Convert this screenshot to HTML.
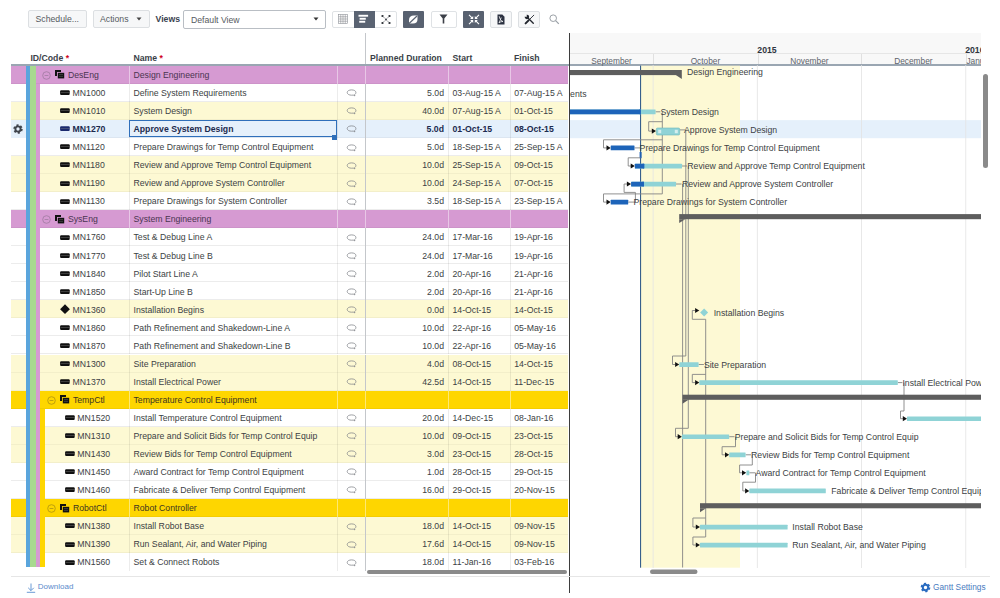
<!DOCTYPE html><html><head><meta charset="utf-8"><style>
*{box-sizing:border-box}
html,body{margin:0;padding:0;width:1000px;height:598px;overflow:hidden;background:#fff;font-family:"Liberation Sans",sans-serif;}
.a{position:absolute}
.t{position:absolute;white-space:nowrap;font-size:8.7px;line-height:12px;color:#3c3f44}
.btn{position:absolute;border:1px solid #dcdfe2;border-radius:2px;background:#f6f7f8}
</style></head><body>

<div class="btn" style="left:28px;top:10px;width:59px;height:18px"></div>
<div class="t" style="left:35.5px;top:13px;color:#555a60">Schedule...</div>
<div class="btn" style="left:93px;top:10px;width:57px;height:18px"></div>
<div class="t" style="left:100px;top:13px;color:#555a60">Actions</div>
<svg class="a" style="left:135.5px;top:17px" width="6" height="4"><path d="M0.5 0.5 L5.5 0.5 L3 3.5Z" fill="#444"/></svg>
<div class="t" style="left:155.5px;top:13px;font-weight:bold;color:#3a4250">Views</div>
<div class="a" style="left:183px;top:10px;width:143px;height:19px;border:1px solid #b9bec4;border-radius:2px;background:#fff"></div>
<div class="t" style="left:191px;top:13.5px;color:#555a60">Default View</div>
<svg class="a" style="left:313px;top:17px" width="6" height="4"><path d="M0.5 0.5 L5.5 0.5 L3 3.5Z" fill="#333"/></svg>
<div class="a" style="left:331.5px;top:10.5px;width:65px;height:17.5px;border:1px solid #dfe2e5;border-radius:2px;background:#fff"></div>
<div class="a" style="left:353.5px;top:10.5px;width:21.5px;height:17.5px;background:#5a6372"></div>
<svg class="a" style="left:338px;top:14px" width="10" height="10"><g stroke="#8d9096" stroke-width="0.6" fill="none"><rect x="0.5" y="0.5" width="9" height="9"/><path d="M2.75 0.5V9.5M5 0.5V9.5M7.25 0.5V9.5M0.5 2.75H9.5M0.5 5H9.5M0.5 7.25H9.5"/></g></svg>
<svg class="a" style="left:358px;top:14px" width="12" height="10"><g fill="#fff"><rect x="0.5" y="0.8" width="9.6" height="1.9"/><rect x="1.6" y="3.8" width="6.2" height="1.9"/><rect x="1.2" y="6.8" width="6" height="1.9"/></g></svg>
<svg class="a" style="left:380px;top:13.5px" width="12" height="11"><g fill="#2a2e35"><ellipse cx="2.5" cy="2" rx="1.2" ry="0.9"/><ellipse cx="9.5" cy="2" rx="1.2" ry="0.9"/><circle cx="6" cy="5.5" r="0.9"/><ellipse cx="2.5" cy="9" rx="1.2" ry="0.9"/><ellipse cx="9.5" cy="9" rx="1.2" ry="0.9"/></g><path d="M3.5 3L5 4.5M8.5 3L7 4.5M3.5 8L5 6.5M8.5 8L7 6.5" stroke="#2a2e35" stroke-width="0.5"/></svg>
<div class="a" style="left:402.5px;top:10.5px;width:21.5px;height:17.5px;background:#586170;border-radius:1px"></div>
<svg class="a" style="left:407px;top:13.5px" width="12" height="11"><path d="M2 6 Q2 1.5 7 1.5 L10.5 1.5 L10.5 5 Q10.5 9.5 6 9.5 L2 9.5Z" fill="#fff"/><path d="M1.5 10 L10 2" stroke="#5a6372" stroke-width="1.2"/></svg>
<div class="a" style="left:430.5px;top:10.5px;width:26px;height:17.5px;border:1px solid #dfe2e5;border-radius:2px;background:#fff"></div>
<svg class="a" style="left:439px;top:14px" width="9" height="10"><path d="M0.5 0.5H8.5L5.3 4.5V9.5H3.7V4.5Z" fill="#3c4048"/></svg>
<div class="a" style="left:462.5px;top:10.5px;width:21.5px;height:17.5px;background:#586170;border-radius:1px"></div>
<svg class="a" style="left:467.5px;top:13.5px" width="12" height="11"><g fill="#fff"><path d="M5.2 5L5.2 1.9L2.1 5Z"/><path d="M6.8 5L6.8 1.9L9.9 5Z"/><path d="M5.2 6L5.2 9.1L2.1 6Z"/><path d="M6.8 6L6.8 9.1L9.9 6Z"/></g><g stroke="#fff" stroke-width="1.1"><path d="M1 0.8L4 3.8M11 0.8L8 3.8M1 10.2L4 7.2M11 10.2L8 7.2"/></g></svg>
<div class="btn" style="left:490px;top:10.5px;width:22px;height:17.5px"></div>
<svg class="a" style="left:497px;top:13.5px" width="8" height="11"><path d="M0.5 0.5H5.3L7.5 2.7V10.5H0.5Z" fill="#2b3140"/><path d="M2.2 2.2C2.6 4.5 3.6 6.5 6 7.6C4.4 7.4 3 7.9 2 9C2.8 7 3.6 5.5 4.2 3.5" stroke="#fff" stroke-width="0.8" fill="none"/></svg>
<div class="btn" style="left:518px;top:10.5px;width:22px;height:17.5px"></div>
<svg class="a" style="left:523.5px;top:13.5px" width="11" height="11"><g stroke="#22262e" stroke-linecap="round" fill="none"><path d="M3.5 3.5L9.3 9.3" stroke-width="1.3"/><path d="M9.8 1.2L5.5 5.5" stroke-width="0.9"/><path d="M4.6 6.4L1.6 9.4" stroke-width="2"/></g><path d="M0.8 2.6A2.2 2.2 0 1 0 2.6 0.8L2.9 2.2L2.2 2.9Z" fill="#22262e"/></svg>
<svg class="a" style="left:549px;top:14px" width="11" height="11"><circle cx="4.2" cy="4.2" r="3.3" stroke="#9aa0a6" stroke-width="1" fill="none"/><path d="M6.6 6.6L9.8 9.8" stroke="#9aa0a6" stroke-width="1.2"/></svg>
<div class="t" style="left:30.4px;top:51.6px;font-weight:bold;color:#3a3f48">ID/Code <span style="color:#d0021b">*</span></div>
<div class="t" style="left:133.5px;top:51.6px;font-weight:bold;color:#3a3f48">Name <span style="color:#d0021b">*</span></div>
<div class="t" style="left:370px;top:51.6px;font-weight:bold;color:#3a3f48">Planned Duration</div>
<div class="t" style="left:452.5px;top:51.6px;font-weight:bold;color:#3a3f48">Start</div>
<div class="t" style="left:514px;top:51.6px;font-weight:bold;color:#3a3f48">Finish</div>
<div class="a" style="left:365px;top:33px;width:1px;height:31px;background:#c4c7cb"></div>
<div class="a" style="left:11px;top:64.1px;width:558px;height:1.6px;background:#9aa6b2"></div>
<div class="a" style="left:11px;top:65.70px;width:557px;height:18.05px;background:#d69ad2;border-bottom:1px solid rgba(0,0,0,0.04)"></div>
<svg class="a" style="left:42.3px;top:70.80px" width="9" height="9"><circle cx="4.5" cy="4.5" r="3.8" stroke="#a67ea6" stroke-width="0.9" fill="none"/><path d="M2.6 4.5H6.4" stroke="#a67ea6" stroke-width="0.9"/></svg>
<svg class="a" style="left:55.2px;top:70.40px" width="10" height="9"><path d="M0 0H6V2H2V6H0Z" fill="#111"/><rect x="2.8" y="2.8" width="6.4" height="5.6" fill="#111"/><path d="M4 4.6H8M4 6.4H8" stroke="#666" stroke-width="0.5"/></svg>
<div class="t" style="left:67.9px;top:69.00px;color:#4a3550">DesEng</div>
<div class="t" style="left:133.5px;top:69.00px;color:#4a3550">Design Engineering</div>
<div class="a" style="left:11px;top:83.75px;width:557px;height:18.05px;background:#ffffff;border-bottom:1px solid #ececec"></div>
<svg class="a" style="left:60px;top:90.25px" width="10" height="6"><rect x="0.1" y="0.3" width="9.6" height="4.6" rx="1" fill="#111"/><rect x="0.8" y="2.25" width="8.2" height="0.7" fill="#888" opacity="0.55"/></svg>
<div class="t" style="left:72.6px;top:87.05px;color:#3c3f44;">MN1000</div>
<div class="t" style="left:133.5px;top:87.05px;color:#3c3f44;">Define System Requirements</div>
<svg class="a" style="left:346px;top:89.35px" width="11" height="8"><path d="M5.6 0.9C8.2 0.9 9.9 2 9.9 3.5C9.9 4.6 9.2 5.4 8.4 5.8L9 6.9L7.2 6.1C6.7 6.2 6.2 6.2 5.6 6.2C3 6.2 1.2 5 1.2 3.5C1.2 2 3 0.9 5.6 0.9Z" stroke="#7d8085" stroke-width="0.75" fill="none"/></svg>
<div class="t" style="left:368px;width:76px;text-align:right;top:87.05px;color:#3c3f44;">5.0d</div>
<div class="t" style="left:452.5px;top:87.05px;color:#3c3f44;">03-Aug-15 A</div>
<div class="t" style="left:514.2px;top:87.05px;color:#3c3f44;">07-Aug-15 A</div>
<div class="a" style="left:11px;top:101.80px;width:557px;height:18.05px;background:#fdf9d3;border-bottom:1px solid rgba(0,0,0,0.04)"></div>
<svg class="a" style="left:60px;top:108.30px" width="10" height="6"><rect x="0.1" y="0.3" width="9.6" height="4.6" rx="1" fill="#111"/><rect x="0.8" y="2.25" width="8.2" height="0.7" fill="#888" opacity="0.55"/></svg>
<div class="t" style="left:72.6px;top:105.10px;color:#3c3f44;">MN1010</div>
<div class="t" style="left:133.5px;top:105.10px;color:#3c3f44;">System Design</div>
<svg class="a" style="left:346px;top:107.40px" width="11" height="8"><path d="M5.6 0.9C8.2 0.9 9.9 2 9.9 3.5C9.9 4.6 9.2 5.4 8.4 5.8L9 6.9L7.2 6.1C6.7 6.2 6.2 6.2 5.6 6.2C3 6.2 1.2 5 1.2 3.5C1.2 2 3 0.9 5.6 0.9Z" stroke="#7d8085" stroke-width="0.75" fill="none"/></svg>
<div class="t" style="left:368px;width:76px;text-align:right;top:105.10px;color:#3c3f44;">40.0d</div>
<div class="t" style="left:452.5px;top:105.10px;color:#3c3f44;">07-Aug-15 A</div>
<div class="t" style="left:514.2px;top:105.10px;color:#3c3f44;">01-Oct-15</div>
<div class="a" style="left:11px;top:119.85px;width:557px;height:18.05px;background:#e5f0fb;border-bottom:1px solid rgba(0,0,0,0.04)"></div>
<svg class="a" style="left:60px;top:126.35px" width="10" height="6"><rect x="0.1" y="0.3" width="9.6" height="4.6" rx="1" fill="#1b2a6e"/><rect x="0.8" y="2.25" width="8.2" height="0.7" fill="#888" opacity="0.55"/></svg>
<div class="t" style="left:72.6px;top:123.15px;color:#1b2a4e;font-weight:bold;">MN1270</div>
<div class="t" style="left:133.5px;top:123.15px;color:#1b2a4e;font-weight:bold;">Approve System Design</div>
<svg class="a" style="left:346px;top:125.45px" width="11" height="8"><path d="M5.6 0.9C8.2 0.9 9.9 2 9.9 3.5C9.9 4.6 9.2 5.4 8.4 5.8L9 6.9L7.2 6.1C6.7 6.2 6.2 6.2 5.6 6.2C3 6.2 1.2 5 1.2 3.5C1.2 2 3 0.9 5.6 0.9Z" stroke="#7d8085" stroke-width="0.75" fill="none"/></svg>
<div class="t" style="left:368px;width:76px;text-align:right;top:123.15px;color:#1b2a4e;font-weight:bold;">5.0d</div>
<div class="t" style="left:452.5px;top:123.15px;color:#1b2a4e;font-weight:bold;">01-Oct-15</div>
<div class="t" style="left:514.2px;top:123.15px;color:#1b2a4e;font-weight:bold;">08-Oct-15</div>
<div class="a" style="left:11px;top:137.90px;width:557px;height:18.05px;background:#ffffff;border-bottom:1px solid #ececec"></div>
<svg class="a" style="left:60px;top:144.40px" width="10" height="6"><rect x="0.1" y="0.3" width="9.6" height="4.6" rx="1" fill="#111"/><rect x="0.8" y="2.25" width="8.2" height="0.7" fill="#888" opacity="0.55"/></svg>
<div class="t" style="left:72.6px;top:141.20px;color:#3c3f44;">MN1120</div>
<div class="t" style="left:133.5px;top:141.20px;color:#3c3f44;">Prepare Drawings for Temp Control Equipment</div>
<svg class="a" style="left:346px;top:143.50px" width="11" height="8"><path d="M5.6 0.9C8.2 0.9 9.9 2 9.9 3.5C9.9 4.6 9.2 5.4 8.4 5.8L9 6.9L7.2 6.1C6.7 6.2 6.2 6.2 5.6 6.2C3 6.2 1.2 5 1.2 3.5C1.2 2 3 0.9 5.6 0.9Z" stroke="#7d8085" stroke-width="0.75" fill="none"/></svg>
<div class="t" style="left:368px;width:76px;text-align:right;top:141.20px;color:#3c3f44;">5.0d</div>
<div class="t" style="left:452.5px;top:141.20px;color:#3c3f44;">18-Sep-15 A</div>
<div class="t" style="left:514.2px;top:141.20px;color:#3c3f44;">25-Sep-15 A</div>
<div class="a" style="left:11px;top:155.95px;width:557px;height:18.05px;background:#fdf9d3;border-bottom:1px solid rgba(0,0,0,0.04)"></div>
<svg class="a" style="left:60px;top:162.45px" width="10" height="6"><rect x="0.1" y="0.3" width="9.6" height="4.6" rx="1" fill="#111"/><rect x="0.8" y="2.25" width="8.2" height="0.7" fill="#888" opacity="0.55"/></svg>
<div class="t" style="left:72.6px;top:159.25px;color:#3c3f44;">MN1180</div>
<div class="t" style="left:133.5px;top:159.25px;color:#3c3f44;">Review and Approve Temp Control Equipment</div>
<svg class="a" style="left:346px;top:161.55px" width="11" height="8"><path d="M5.6 0.9C8.2 0.9 9.9 2 9.9 3.5C9.9 4.6 9.2 5.4 8.4 5.8L9 6.9L7.2 6.1C6.7 6.2 6.2 6.2 5.6 6.2C3 6.2 1.2 5 1.2 3.5C1.2 2 3 0.9 5.6 0.9Z" stroke="#7d8085" stroke-width="0.75" fill="none"/></svg>
<div class="t" style="left:368px;width:76px;text-align:right;top:159.25px;color:#3c3f44;">10.0d</div>
<div class="t" style="left:452.5px;top:159.25px;color:#3c3f44;">25-Sep-15 A</div>
<div class="t" style="left:514.2px;top:159.25px;color:#3c3f44;">09-Oct-15</div>
<div class="a" style="left:11px;top:174.00px;width:557px;height:18.05px;background:#fdf9d3;border-bottom:1px solid rgba(0,0,0,0.04)"></div>
<svg class="a" style="left:60px;top:180.50px" width="10" height="6"><rect x="0.1" y="0.3" width="9.6" height="4.6" rx="1" fill="#111"/><rect x="0.8" y="2.25" width="8.2" height="0.7" fill="#888" opacity="0.55"/></svg>
<div class="t" style="left:72.6px;top:177.30px;color:#3c3f44;">MN1190</div>
<div class="t" style="left:133.5px;top:177.30px;color:#3c3f44;">Review and Approve System Controller</div>
<svg class="a" style="left:346px;top:179.60px" width="11" height="8"><path d="M5.6 0.9C8.2 0.9 9.9 2 9.9 3.5C9.9 4.6 9.2 5.4 8.4 5.8L9 6.9L7.2 6.1C6.7 6.2 6.2 6.2 5.6 6.2C3 6.2 1.2 5 1.2 3.5C1.2 2 3 0.9 5.6 0.9Z" stroke="#7d8085" stroke-width="0.75" fill="none"/></svg>
<div class="t" style="left:368px;width:76px;text-align:right;top:177.30px;color:#3c3f44;">10.0d</div>
<div class="t" style="left:452.5px;top:177.30px;color:#3c3f44;">24-Sep-15 A</div>
<div class="t" style="left:514.2px;top:177.30px;color:#3c3f44;">07-Oct-15</div>
<div class="a" style="left:11px;top:192.05px;width:557px;height:18.05px;background:#ffffff;border-bottom:1px solid #ececec"></div>
<svg class="a" style="left:60px;top:198.55px" width="10" height="6"><rect x="0.1" y="0.3" width="9.6" height="4.6" rx="1" fill="#111"/><rect x="0.8" y="2.25" width="8.2" height="0.7" fill="#888" opacity="0.55"/></svg>
<div class="t" style="left:72.6px;top:195.35px;color:#3c3f44;">MN1130</div>
<div class="t" style="left:133.5px;top:195.35px;color:#3c3f44;">Prepare Drawings for System Controller</div>
<svg class="a" style="left:346px;top:197.65px" width="11" height="8"><path d="M5.6 0.9C8.2 0.9 9.9 2 9.9 3.5C9.9 4.6 9.2 5.4 8.4 5.8L9 6.9L7.2 6.1C6.7 6.2 6.2 6.2 5.6 6.2C3 6.2 1.2 5 1.2 3.5C1.2 2 3 0.9 5.6 0.9Z" stroke="#7d8085" stroke-width="0.75" fill="none"/></svg>
<div class="t" style="left:368px;width:76px;text-align:right;top:195.35px;color:#3c3f44;">3.5d</div>
<div class="t" style="left:452.5px;top:195.35px;color:#3c3f44;">18-Sep-15 A</div>
<div class="t" style="left:514.2px;top:195.35px;color:#3c3f44;">23-Sep-15 A</div>
<div class="a" style="left:11px;top:210.10px;width:557px;height:18.05px;background:#d69ad2;border-bottom:1px solid rgba(0,0,0,0.04)"></div>
<svg class="a" style="left:42.3px;top:215.20px" width="9" height="9"><circle cx="4.5" cy="4.5" r="3.8" stroke="#a67ea6" stroke-width="0.9" fill="none"/><path d="M2.6 4.5H6.4" stroke="#a67ea6" stroke-width="0.9"/></svg>
<svg class="a" style="left:55.2px;top:214.80px" width="10" height="9"><path d="M0 0H6V2H2V6H0Z" fill="#111"/><rect x="2.8" y="2.8" width="6.4" height="5.6" fill="#111"/><path d="M4 4.6H8M4 6.4H8" stroke="#666" stroke-width="0.5"/></svg>
<div class="t" style="left:67.9px;top:213.40px;color:#4a3550">SysEng</div>
<div class="t" style="left:133.5px;top:213.40px;color:#4a3550">System Engineering</div>
<div class="a" style="left:11px;top:228.15px;width:557px;height:18.05px;background:#ffffff;border-bottom:1px solid #ececec"></div>
<svg class="a" style="left:60px;top:234.65px" width="10" height="6"><rect x="0.1" y="0.3" width="9.6" height="4.6" rx="1" fill="#111"/><rect x="0.8" y="2.25" width="8.2" height="0.7" fill="#888" opacity="0.55"/></svg>
<div class="t" style="left:72.6px;top:231.45px;color:#3c3f44;">MN1760</div>
<div class="t" style="left:133.5px;top:231.45px;color:#3c3f44;">Test &amp; Debug Line A</div>
<svg class="a" style="left:346px;top:233.75px" width="11" height="8"><path d="M5.6 0.9C8.2 0.9 9.9 2 9.9 3.5C9.9 4.6 9.2 5.4 8.4 5.8L9 6.9L7.2 6.1C6.7 6.2 6.2 6.2 5.6 6.2C3 6.2 1.2 5 1.2 3.5C1.2 2 3 0.9 5.6 0.9Z" stroke="#7d8085" stroke-width="0.75" fill="none"/></svg>
<div class="t" style="left:368px;width:76px;text-align:right;top:231.45px;color:#3c3f44;">24.0d</div>
<div class="t" style="left:452.5px;top:231.45px;color:#3c3f44;">17-Mar-16</div>
<div class="t" style="left:514.2px;top:231.45px;color:#3c3f44;">19-Apr-16</div>
<div class="a" style="left:11px;top:246.20px;width:557px;height:18.05px;background:#ffffff;border-bottom:1px solid #ececec"></div>
<svg class="a" style="left:60px;top:252.70px" width="10" height="6"><rect x="0.1" y="0.3" width="9.6" height="4.6" rx="1" fill="#111"/><rect x="0.8" y="2.25" width="8.2" height="0.7" fill="#888" opacity="0.55"/></svg>
<div class="t" style="left:72.6px;top:249.50px;color:#3c3f44;">MN1770</div>
<div class="t" style="left:133.5px;top:249.50px;color:#3c3f44;">Test &amp; Debug Line B</div>
<svg class="a" style="left:346px;top:251.80px" width="11" height="8"><path d="M5.6 0.9C8.2 0.9 9.9 2 9.9 3.5C9.9 4.6 9.2 5.4 8.4 5.8L9 6.9L7.2 6.1C6.7 6.2 6.2 6.2 5.6 6.2C3 6.2 1.2 5 1.2 3.5C1.2 2 3 0.9 5.6 0.9Z" stroke="#7d8085" stroke-width="0.75" fill="none"/></svg>
<div class="t" style="left:368px;width:76px;text-align:right;top:249.50px;color:#3c3f44;">24.0d</div>
<div class="t" style="left:452.5px;top:249.50px;color:#3c3f44;">17-Mar-16</div>
<div class="t" style="left:514.2px;top:249.50px;color:#3c3f44;">19-Apr-16</div>
<div class="a" style="left:11px;top:264.25px;width:557px;height:18.05px;background:#ffffff;border-bottom:1px solid #ececec"></div>
<svg class="a" style="left:60px;top:270.75px" width="10" height="6"><rect x="0.1" y="0.3" width="9.6" height="4.6" rx="1" fill="#111"/><rect x="0.8" y="2.25" width="8.2" height="0.7" fill="#888" opacity="0.55"/></svg>
<div class="t" style="left:72.6px;top:267.55px;color:#3c3f44;">MN1840</div>
<div class="t" style="left:133.5px;top:267.55px;color:#3c3f44;">Pilot Start Line A</div>
<svg class="a" style="left:346px;top:269.85px" width="11" height="8"><path d="M5.6 0.9C8.2 0.9 9.9 2 9.9 3.5C9.9 4.6 9.2 5.4 8.4 5.8L9 6.9L7.2 6.1C6.7 6.2 6.2 6.2 5.6 6.2C3 6.2 1.2 5 1.2 3.5C1.2 2 3 0.9 5.6 0.9Z" stroke="#7d8085" stroke-width="0.75" fill="none"/></svg>
<div class="t" style="left:368px;width:76px;text-align:right;top:267.55px;color:#3c3f44;">2.0d</div>
<div class="t" style="left:452.5px;top:267.55px;color:#3c3f44;">20-Apr-16</div>
<div class="t" style="left:514.2px;top:267.55px;color:#3c3f44;">21-Apr-16</div>
<div class="a" style="left:11px;top:282.30px;width:557px;height:18.05px;background:#ffffff;border-bottom:1px solid #ececec"></div>
<svg class="a" style="left:60px;top:288.80px" width="10" height="6"><rect x="0.1" y="0.3" width="9.6" height="4.6" rx="1" fill="#111"/><rect x="0.8" y="2.25" width="8.2" height="0.7" fill="#888" opacity="0.55"/></svg>
<div class="t" style="left:72.6px;top:285.60px;color:#3c3f44;">MN1850</div>
<div class="t" style="left:133.5px;top:285.60px;color:#3c3f44;">Start-Up Line B</div>
<svg class="a" style="left:346px;top:287.90px" width="11" height="8"><path d="M5.6 0.9C8.2 0.9 9.9 2 9.9 3.5C9.9 4.6 9.2 5.4 8.4 5.8L9 6.9L7.2 6.1C6.7 6.2 6.2 6.2 5.6 6.2C3 6.2 1.2 5 1.2 3.5C1.2 2 3 0.9 5.6 0.9Z" stroke="#7d8085" stroke-width="0.75" fill="none"/></svg>
<div class="t" style="left:368px;width:76px;text-align:right;top:285.60px;color:#3c3f44;">2.0d</div>
<div class="t" style="left:452.5px;top:285.60px;color:#3c3f44;">20-Apr-16</div>
<div class="t" style="left:514.2px;top:285.60px;color:#3c3f44;">21-Apr-16</div>
<div class="a" style="left:11px;top:300.35px;width:557px;height:18.05px;background:#fdf9d3;border-bottom:1px solid rgba(0,0,0,0.04)"></div>
<svg class="a" style="left:59.5px;top:304.25px" width="11" height="11"><path d="M5 0.3L9.9 5.2L5 10.1L0.1 5.2Z" fill="#111"/></svg>
<div class="t" style="left:72.6px;top:303.65px;color:#3c3f44;">MN1360</div>
<div class="t" style="left:133.5px;top:303.65px;color:#3c3f44;">Installation Begins</div>
<svg class="a" style="left:346px;top:305.95px" width="11" height="8"><path d="M5.6 0.9C8.2 0.9 9.9 2 9.9 3.5C9.9 4.6 9.2 5.4 8.4 5.8L9 6.9L7.2 6.1C6.7 6.2 6.2 6.2 5.6 6.2C3 6.2 1.2 5 1.2 3.5C1.2 2 3 0.9 5.6 0.9Z" stroke="#7d8085" stroke-width="0.75" fill="none"/></svg>
<div class="t" style="left:368px;width:76px;text-align:right;top:303.65px;color:#3c3f44;">0.0d</div>
<div class="t" style="left:452.5px;top:303.65px;color:#3c3f44;">14-Oct-15</div>
<div class="t" style="left:514.2px;top:303.65px;color:#3c3f44;">14-Oct-15</div>
<div class="a" style="left:11px;top:318.40px;width:557px;height:18.05px;background:#ffffff;border-bottom:1px solid #ececec"></div>
<svg class="a" style="left:60px;top:324.90px" width="10" height="6"><rect x="0.1" y="0.3" width="9.6" height="4.6" rx="1" fill="#111"/><rect x="0.8" y="2.25" width="8.2" height="0.7" fill="#888" opacity="0.55"/></svg>
<div class="t" style="left:72.6px;top:321.70px;color:#3c3f44;">MN1860</div>
<div class="t" style="left:133.5px;top:321.70px;color:#3c3f44;">Path Refinement and Shakedown-Line A</div>
<svg class="a" style="left:346px;top:324.00px" width="11" height="8"><path d="M5.6 0.9C8.2 0.9 9.9 2 9.9 3.5C9.9 4.6 9.2 5.4 8.4 5.8L9 6.9L7.2 6.1C6.7 6.2 6.2 6.2 5.6 6.2C3 6.2 1.2 5 1.2 3.5C1.2 2 3 0.9 5.6 0.9Z" stroke="#7d8085" stroke-width="0.75" fill="none"/></svg>
<div class="t" style="left:368px;width:76px;text-align:right;top:321.70px;color:#3c3f44;">10.0d</div>
<div class="t" style="left:452.5px;top:321.70px;color:#3c3f44;">22-Apr-16</div>
<div class="t" style="left:514.2px;top:321.70px;color:#3c3f44;">05-May-16</div>
<div class="a" style="left:11px;top:336.45px;width:557px;height:18.05px;background:#ffffff;border-bottom:1px solid #ececec"></div>
<svg class="a" style="left:60px;top:342.95px" width="10" height="6"><rect x="0.1" y="0.3" width="9.6" height="4.6" rx="1" fill="#111"/><rect x="0.8" y="2.25" width="8.2" height="0.7" fill="#888" opacity="0.55"/></svg>
<div class="t" style="left:72.6px;top:339.75px;color:#3c3f44;">MN1870</div>
<div class="t" style="left:133.5px;top:339.75px;color:#3c3f44;">Path Refinement and Shakedown-Line B</div>
<svg class="a" style="left:346px;top:342.05px" width="11" height="8"><path d="M5.6 0.9C8.2 0.9 9.9 2 9.9 3.5C9.9 4.6 9.2 5.4 8.4 5.8L9 6.9L7.2 6.1C6.7 6.2 6.2 6.2 5.6 6.2C3 6.2 1.2 5 1.2 3.5C1.2 2 3 0.9 5.6 0.9Z" stroke="#7d8085" stroke-width="0.75" fill="none"/></svg>
<div class="t" style="left:368px;width:76px;text-align:right;top:339.75px;color:#3c3f44;">10.0d</div>
<div class="t" style="left:452.5px;top:339.75px;color:#3c3f44;">22-Apr-16</div>
<div class="t" style="left:514.2px;top:339.75px;color:#3c3f44;">05-May-16</div>
<div class="a" style="left:11px;top:354.50px;width:557px;height:18.05px;background:#fdf9d3;border-bottom:1px solid rgba(0,0,0,0.04)"></div>
<svg class="a" style="left:60px;top:361.00px" width="10" height="6"><rect x="0.1" y="0.3" width="9.6" height="4.6" rx="1" fill="#111"/><rect x="0.8" y="2.25" width="8.2" height="0.7" fill="#888" opacity="0.55"/></svg>
<div class="t" style="left:72.6px;top:357.80px;color:#3c3f44;">MN1300</div>
<div class="t" style="left:133.5px;top:357.80px;color:#3c3f44;">Site Preparation</div>
<svg class="a" style="left:346px;top:360.10px" width="11" height="8"><path d="M5.6 0.9C8.2 0.9 9.9 2 9.9 3.5C9.9 4.6 9.2 5.4 8.4 5.8L9 6.9L7.2 6.1C6.7 6.2 6.2 6.2 5.6 6.2C3 6.2 1.2 5 1.2 3.5C1.2 2 3 0.9 5.6 0.9Z" stroke="#7d8085" stroke-width="0.75" fill="none"/></svg>
<div class="t" style="left:368px;width:76px;text-align:right;top:357.80px;color:#3c3f44;">4.0d</div>
<div class="t" style="left:452.5px;top:357.80px;color:#3c3f44;">08-Oct-15</div>
<div class="t" style="left:514.2px;top:357.80px;color:#3c3f44;">14-Oct-15</div>
<div class="a" style="left:11px;top:372.55px;width:557px;height:18.05px;background:#fdf9d3;border-bottom:1px solid rgba(0,0,0,0.04)"></div>
<svg class="a" style="left:60px;top:379.05px" width="10" height="6"><rect x="0.1" y="0.3" width="9.6" height="4.6" rx="1" fill="#111"/><rect x="0.8" y="2.25" width="8.2" height="0.7" fill="#888" opacity="0.55"/></svg>
<div class="t" style="left:72.6px;top:375.85px;color:#3c3f44;">MN1370</div>
<div class="t" style="left:133.5px;top:375.85px;color:#3c3f44;">Install Electrical Power</div>
<svg class="a" style="left:346px;top:378.15px" width="11" height="8"><path d="M5.6 0.9C8.2 0.9 9.9 2 9.9 3.5C9.9 4.6 9.2 5.4 8.4 5.8L9 6.9L7.2 6.1C6.7 6.2 6.2 6.2 5.6 6.2C3 6.2 1.2 5 1.2 3.5C1.2 2 3 0.9 5.6 0.9Z" stroke="#7d8085" stroke-width="0.75" fill="none"/></svg>
<div class="t" style="left:368px;width:76px;text-align:right;top:375.85px;color:#3c3f44;">42.5d</div>
<div class="t" style="left:452.5px;top:375.85px;color:#3c3f44;">14-Oct-15</div>
<div class="t" style="left:514.2px;top:375.85px;color:#3c3f44;">11-Dec-15</div>
<div class="a" style="left:11px;top:390.60px;width:557px;height:18.05px;background:#fed600;border-bottom:1px solid rgba(0,0,0,0.04)"></div>
<svg class="a" style="left:47.3px;top:395.70px" width="9" height="9"><circle cx="4.5" cy="4.5" r="3.8" stroke="#b89a10" stroke-width="0.9" fill="none"/><path d="M2.6 4.5H6.4" stroke="#b89a10" stroke-width="0.9"/></svg>
<svg class="a" style="left:60.2px;top:395.30px" width="10" height="9"><path d="M0 0H6V2H2V6H0Z" fill="#111"/><rect x="2.8" y="2.8" width="6.4" height="5.6" fill="#111"/><path d="M4 4.6H8M4 6.4H8" stroke="#666" stroke-width="0.5"/></svg>
<div class="t" style="left:72.9px;top:393.90px;color:#3d3520">TempCtl</div>
<div class="t" style="left:133.5px;top:393.90px;color:#3d3520">Temperature Control Equipment</div>
<div class="a" style="left:11px;top:408.65px;width:557px;height:18.05px;background:#ffffff;border-bottom:1px solid #ececec"></div>
<svg class="a" style="left:64.7px;top:415.15px" width="10" height="6"><rect x="0.1" y="0.3" width="9.6" height="4.6" rx="1" fill="#111"/><rect x="0.8" y="2.25" width="8.2" height="0.7" fill="#888" opacity="0.55"/></svg>
<div class="t" style="left:77.3px;top:411.95px;color:#3c3f44;">MN1520</div>
<div class="t" style="left:133.5px;top:411.95px;color:#3c3f44;">Install Temperature Control Equipment</div>
<svg class="a" style="left:346px;top:414.25px" width="11" height="8"><path d="M5.6 0.9C8.2 0.9 9.9 2 9.9 3.5C9.9 4.6 9.2 5.4 8.4 5.8L9 6.9L7.2 6.1C6.7 6.2 6.2 6.2 5.6 6.2C3 6.2 1.2 5 1.2 3.5C1.2 2 3 0.9 5.6 0.9Z" stroke="#7d8085" stroke-width="0.75" fill="none"/></svg>
<div class="t" style="left:368px;width:76px;text-align:right;top:411.95px;color:#3c3f44;">20.0d</div>
<div class="t" style="left:452.5px;top:411.95px;color:#3c3f44;">14-Dec-15</div>
<div class="t" style="left:514.2px;top:411.95px;color:#3c3f44;">08-Jan-16</div>
<div class="a" style="left:11px;top:426.70px;width:557px;height:18.05px;background:#fdf9d3;border-bottom:1px solid rgba(0,0,0,0.04)"></div>
<svg class="a" style="left:64.7px;top:433.20px" width="10" height="6"><rect x="0.1" y="0.3" width="9.6" height="4.6" rx="1" fill="#111"/><rect x="0.8" y="2.25" width="8.2" height="0.7" fill="#888" opacity="0.55"/></svg>
<div class="t" style="left:77.3px;top:430.00px;color:#3c3f44;">MN1310</div>
<div class="t" style="left:133.5px;top:430.00px;color:#3c3f44;">Prepare and Solicit Bids for Temp Control Equip</div>
<svg class="a" style="left:346px;top:432.30px" width="11" height="8"><path d="M5.6 0.9C8.2 0.9 9.9 2 9.9 3.5C9.9 4.6 9.2 5.4 8.4 5.8L9 6.9L7.2 6.1C6.7 6.2 6.2 6.2 5.6 6.2C3 6.2 1.2 5 1.2 3.5C1.2 2 3 0.9 5.6 0.9Z" stroke="#7d8085" stroke-width="0.75" fill="none"/></svg>
<div class="t" style="left:368px;width:76px;text-align:right;top:430.00px;color:#3c3f44;">10.0d</div>
<div class="t" style="left:452.5px;top:430.00px;color:#3c3f44;">09-Oct-15</div>
<div class="t" style="left:514.2px;top:430.00px;color:#3c3f44;">23-Oct-15</div>
<div class="a" style="left:11px;top:444.75px;width:557px;height:18.05px;background:#fdf9d3;border-bottom:1px solid rgba(0,0,0,0.04)"></div>
<svg class="a" style="left:64.7px;top:451.25px" width="10" height="6"><rect x="0.1" y="0.3" width="9.6" height="4.6" rx="1" fill="#111"/><rect x="0.8" y="2.25" width="8.2" height="0.7" fill="#888" opacity="0.55"/></svg>
<div class="t" style="left:77.3px;top:448.05px;color:#3c3f44;">MN1430</div>
<div class="t" style="left:133.5px;top:448.05px;color:#3c3f44;">Review Bids for Temp Control Equipment</div>
<svg class="a" style="left:346px;top:450.35px" width="11" height="8"><path d="M5.6 0.9C8.2 0.9 9.9 2 9.9 3.5C9.9 4.6 9.2 5.4 8.4 5.8L9 6.9L7.2 6.1C6.7 6.2 6.2 6.2 5.6 6.2C3 6.2 1.2 5 1.2 3.5C1.2 2 3 0.9 5.6 0.9Z" stroke="#7d8085" stroke-width="0.75" fill="none"/></svg>
<div class="t" style="left:368px;width:76px;text-align:right;top:448.05px;color:#3c3f44;">3.0d</div>
<div class="t" style="left:452.5px;top:448.05px;color:#3c3f44;">23-Oct-15</div>
<div class="t" style="left:514.2px;top:448.05px;color:#3c3f44;">28-Oct-15</div>
<div class="a" style="left:11px;top:462.80px;width:557px;height:18.05px;background:#ffffff;border-bottom:1px solid #ececec"></div>
<svg class="a" style="left:64.7px;top:469.30px" width="10" height="6"><rect x="0.1" y="0.3" width="9.6" height="4.6" rx="1" fill="#111"/><rect x="0.8" y="2.25" width="8.2" height="0.7" fill="#888" opacity="0.55"/></svg>
<div class="t" style="left:77.3px;top:466.10px;color:#3c3f44;">MN1450</div>
<div class="t" style="left:133.5px;top:466.10px;color:#3c3f44;">Award Contract for Temp Control Equipment</div>
<svg class="a" style="left:346px;top:468.40px" width="11" height="8"><path d="M5.6 0.9C8.2 0.9 9.9 2 9.9 3.5C9.9 4.6 9.2 5.4 8.4 5.8L9 6.9L7.2 6.1C6.7 6.2 6.2 6.2 5.6 6.2C3 6.2 1.2 5 1.2 3.5C1.2 2 3 0.9 5.6 0.9Z" stroke="#7d8085" stroke-width="0.75" fill="none"/></svg>
<div class="t" style="left:368px;width:76px;text-align:right;top:466.10px;color:#3c3f44;">1.0d</div>
<div class="t" style="left:452.5px;top:466.10px;color:#3c3f44;">28-Oct-15</div>
<div class="t" style="left:514.2px;top:466.10px;color:#3c3f44;">29-Oct-15</div>
<div class="a" style="left:11px;top:480.85px;width:557px;height:18.05px;background:#ffffff;border-bottom:1px solid #ececec"></div>
<svg class="a" style="left:64.7px;top:487.35px" width="10" height="6"><rect x="0.1" y="0.3" width="9.6" height="4.6" rx="1" fill="#111"/><rect x="0.8" y="2.25" width="8.2" height="0.7" fill="#888" opacity="0.55"/></svg>
<div class="t" style="left:77.3px;top:484.15px;color:#3c3f44;">MN1460</div>
<div class="t" style="left:133.5px;top:484.15px;color:#3c3f44;">Fabricate &amp; Deliver Temp Control Equipment</div>
<svg class="a" style="left:346px;top:486.45px" width="11" height="8"><path d="M5.6 0.9C8.2 0.9 9.9 2 9.9 3.5C9.9 4.6 9.2 5.4 8.4 5.8L9 6.9L7.2 6.1C6.7 6.2 6.2 6.2 5.6 6.2C3 6.2 1.2 5 1.2 3.5C1.2 2 3 0.9 5.6 0.9Z" stroke="#7d8085" stroke-width="0.75" fill="none"/></svg>
<div class="t" style="left:368px;width:76px;text-align:right;top:484.15px;color:#3c3f44;">16.0d</div>
<div class="t" style="left:452.5px;top:484.15px;color:#3c3f44;">29-Oct-15</div>
<div class="t" style="left:514.2px;top:484.15px;color:#3c3f44;">20-Nov-15</div>
<div class="a" style="left:11px;top:498.90px;width:557px;height:18.05px;background:#fed600;border-bottom:1px solid rgba(0,0,0,0.04)"></div>
<svg class="a" style="left:47.3px;top:504.00px" width="9" height="9"><circle cx="4.5" cy="4.5" r="3.8" stroke="#b89a10" stroke-width="0.9" fill="none"/><path d="M2.6 4.5H6.4" stroke="#b89a10" stroke-width="0.9"/></svg>
<svg class="a" style="left:60.2px;top:503.60px" width="10" height="9"><path d="M0 0H6V2H2V6H0Z" fill="#111"/><rect x="2.8" y="2.8" width="6.4" height="5.6" fill="#111"/><path d="M4 4.6H8M4 6.4H8" stroke="#666" stroke-width="0.5"/></svg>
<div class="t" style="left:72.9px;top:502.20px;color:#3d3520">RobotCtl</div>
<div class="t" style="left:133.5px;top:502.20px;color:#3d3520">Robot Controller</div>
<div class="a" style="left:11px;top:516.95px;width:557px;height:18.05px;background:#fdf9d3;border-bottom:1px solid rgba(0,0,0,0.04)"></div>
<svg class="a" style="left:64.7px;top:523.45px" width="10" height="6"><rect x="0.1" y="0.3" width="9.6" height="4.6" rx="1" fill="#111"/><rect x="0.8" y="2.25" width="8.2" height="0.7" fill="#888" opacity="0.55"/></svg>
<div class="t" style="left:77.3px;top:520.25px;color:#3c3f44;">MN1380</div>
<div class="t" style="left:133.5px;top:520.25px;color:#3c3f44;">Install Robot Base</div>
<svg class="a" style="left:346px;top:522.55px" width="11" height="8"><path d="M5.6 0.9C8.2 0.9 9.9 2 9.9 3.5C9.9 4.6 9.2 5.4 8.4 5.8L9 6.9L7.2 6.1C6.7 6.2 6.2 6.2 5.6 6.2C3 6.2 1.2 5 1.2 3.5C1.2 2 3 0.9 5.6 0.9Z" stroke="#7d8085" stroke-width="0.75" fill="none"/></svg>
<div class="t" style="left:368px;width:76px;text-align:right;top:520.25px;color:#3c3f44;">18.0d</div>
<div class="t" style="left:452.5px;top:520.25px;color:#3c3f44;">14-Oct-15</div>
<div class="t" style="left:514.2px;top:520.25px;color:#3c3f44;">09-Nov-15</div>
<div class="a" style="left:11px;top:535.00px;width:557px;height:18.05px;background:#fdf9d3;border-bottom:1px solid rgba(0,0,0,0.04)"></div>
<svg class="a" style="left:64.7px;top:541.50px" width="10" height="6"><rect x="0.1" y="0.3" width="9.6" height="4.6" rx="1" fill="#111"/><rect x="0.8" y="2.25" width="8.2" height="0.7" fill="#888" opacity="0.55"/></svg>
<div class="t" style="left:77.3px;top:538.30px;color:#3c3f44;">MN1390</div>
<div class="t" style="left:133.5px;top:538.30px;color:#3c3f44;">Run Sealant, Air, and Water Piping</div>
<svg class="a" style="left:346px;top:540.60px" width="11" height="8"><path d="M5.6 0.9C8.2 0.9 9.9 2 9.9 3.5C9.9 4.6 9.2 5.4 8.4 5.8L9 6.9L7.2 6.1C6.7 6.2 6.2 6.2 5.6 6.2C3 6.2 1.2 5 1.2 3.5C1.2 2 3 0.9 5.6 0.9Z" stroke="#7d8085" stroke-width="0.75" fill="none"/></svg>
<div class="t" style="left:368px;width:76px;text-align:right;top:538.30px;color:#3c3f44;">17.6d</div>
<div class="t" style="left:452.5px;top:538.30px;color:#3c3f44;">14-Oct-15</div>
<div class="t" style="left:514.2px;top:538.30px;color:#3c3f44;">09-Nov-15</div>
<div class="a" style="left:11px;top:553.05px;width:557px;height:18.05px;background:#ffffff;border-bottom:0"></div>
<svg class="a" style="left:64.7px;top:559.55px" width="10" height="6"><rect x="0.1" y="0.3" width="9.6" height="4.6" rx="1" fill="#111"/><rect x="0.8" y="2.25" width="8.2" height="0.7" fill="#888" opacity="0.55"/></svg>
<div class="t" style="left:77.3px;top:556.35px;color:#3c3f44;">MN1560</div>
<div class="t" style="left:133.5px;top:556.35px;color:#3c3f44;">Set &amp; Connect Robots</div>
<svg class="a" style="left:346px;top:558.65px" width="11" height="8"><path d="M5.6 0.9C8.2 0.9 9.9 2 9.9 3.5C9.9 4.6 9.2 5.4 8.4 5.8L9 6.9L7.2 6.1C6.7 6.2 6.2 6.2 5.6 6.2C3 6.2 1.2 5 1.2 3.5C1.2 2 3 0.9 5.6 0.9Z" stroke="#7d8085" stroke-width="0.75" fill="none"/></svg>
<div class="t" style="left:368px;width:76px;text-align:right;top:556.35px;color:#3c3f44;">18.0d</div>
<div class="t" style="left:452.5px;top:556.35px;color:#3c3f44;">11-Jan-16</div>
<div class="t" style="left:514.2px;top:556.35px;color:#3c3f44;">03-Feb-16</div>
<div class="a" style="left:129px;top:65.70px;width:1px;height:18.05px;background:rgba(255,255,255,0.45)"></div>
<div class="a" style="left:337px;top:65.70px;width:1px;height:18.05px;background:rgba(255,255,255,0.45)"></div>
<div class="a" style="left:365px;top:65.70px;width:1px;height:18.05px;background:rgba(255,255,255,0.45)"></div>
<div class="a" style="left:448px;top:65.70px;width:1px;height:18.05px;background:rgba(255,255,255,0.45)"></div>
<div class="a" style="left:510px;top:65.70px;width:1px;height:18.05px;background:rgba(255,255,255,0.45)"></div>
<div class="a" style="left:129px;top:83.75px;width:1px;height:18.05px;background:rgba(0,0,0,0.075)"></div>
<div class="a" style="left:337px;top:83.75px;width:1px;height:18.05px;background:rgba(0,0,0,0.075)"></div>
<div class="a" style="left:365px;top:83.75px;width:1px;height:18.05px;background:#c4c7cb"></div>
<div class="a" style="left:448px;top:83.75px;width:1px;height:18.05px;background:rgba(0,0,0,0.075)"></div>
<div class="a" style="left:510px;top:83.75px;width:1px;height:18.05px;background:rgba(0,0,0,0.075)"></div>
<div class="a" style="left:129px;top:101.80px;width:1px;height:18.05px;background:rgba(0,0,0,0.075)"></div>
<div class="a" style="left:337px;top:101.80px;width:1px;height:18.05px;background:rgba(0,0,0,0.075)"></div>
<div class="a" style="left:365px;top:101.80px;width:1px;height:18.05px;background:#c4c7cb"></div>
<div class="a" style="left:448px;top:101.80px;width:1px;height:18.05px;background:rgba(0,0,0,0.075)"></div>
<div class="a" style="left:510px;top:101.80px;width:1px;height:18.05px;background:rgba(0,0,0,0.075)"></div>
<div class="a" style="left:129px;top:119.85px;width:1px;height:18.05px;background:rgba(0,0,0,0.075)"></div>
<div class="a" style="left:337px;top:119.85px;width:1px;height:18.05px;background:rgba(0,0,0,0.075)"></div>
<div class="a" style="left:365px;top:119.85px;width:1px;height:18.05px;background:#c4c7cb"></div>
<div class="a" style="left:448px;top:119.85px;width:1px;height:18.05px;background:rgba(0,0,0,0.075)"></div>
<div class="a" style="left:510px;top:119.85px;width:1px;height:18.05px;background:rgba(0,0,0,0.075)"></div>
<div class="a" style="left:129px;top:137.90px;width:1px;height:18.05px;background:rgba(0,0,0,0.075)"></div>
<div class="a" style="left:337px;top:137.90px;width:1px;height:18.05px;background:rgba(0,0,0,0.075)"></div>
<div class="a" style="left:365px;top:137.90px;width:1px;height:18.05px;background:#c4c7cb"></div>
<div class="a" style="left:448px;top:137.90px;width:1px;height:18.05px;background:rgba(0,0,0,0.075)"></div>
<div class="a" style="left:510px;top:137.90px;width:1px;height:18.05px;background:rgba(0,0,0,0.075)"></div>
<div class="a" style="left:129px;top:155.95px;width:1px;height:18.05px;background:rgba(0,0,0,0.075)"></div>
<div class="a" style="left:337px;top:155.95px;width:1px;height:18.05px;background:rgba(0,0,0,0.075)"></div>
<div class="a" style="left:365px;top:155.95px;width:1px;height:18.05px;background:#c4c7cb"></div>
<div class="a" style="left:448px;top:155.95px;width:1px;height:18.05px;background:rgba(0,0,0,0.075)"></div>
<div class="a" style="left:510px;top:155.95px;width:1px;height:18.05px;background:rgba(0,0,0,0.075)"></div>
<div class="a" style="left:129px;top:174.00px;width:1px;height:18.05px;background:rgba(0,0,0,0.075)"></div>
<div class="a" style="left:337px;top:174.00px;width:1px;height:18.05px;background:rgba(0,0,0,0.075)"></div>
<div class="a" style="left:365px;top:174.00px;width:1px;height:18.05px;background:#c4c7cb"></div>
<div class="a" style="left:448px;top:174.00px;width:1px;height:18.05px;background:rgba(0,0,0,0.075)"></div>
<div class="a" style="left:510px;top:174.00px;width:1px;height:18.05px;background:rgba(0,0,0,0.075)"></div>
<div class="a" style="left:129px;top:192.05px;width:1px;height:18.05px;background:rgba(0,0,0,0.075)"></div>
<div class="a" style="left:337px;top:192.05px;width:1px;height:18.05px;background:rgba(0,0,0,0.075)"></div>
<div class="a" style="left:365px;top:192.05px;width:1px;height:18.05px;background:#c4c7cb"></div>
<div class="a" style="left:448px;top:192.05px;width:1px;height:18.05px;background:rgba(0,0,0,0.075)"></div>
<div class="a" style="left:510px;top:192.05px;width:1px;height:18.05px;background:rgba(0,0,0,0.075)"></div>
<div class="a" style="left:129px;top:210.10px;width:1px;height:18.05px;background:rgba(255,255,255,0.45)"></div>
<div class="a" style="left:337px;top:210.10px;width:1px;height:18.05px;background:rgba(255,255,255,0.45)"></div>
<div class="a" style="left:365px;top:210.10px;width:1px;height:18.05px;background:rgba(255,255,255,0.45)"></div>
<div class="a" style="left:448px;top:210.10px;width:1px;height:18.05px;background:rgba(255,255,255,0.45)"></div>
<div class="a" style="left:510px;top:210.10px;width:1px;height:18.05px;background:rgba(255,255,255,0.45)"></div>
<div class="a" style="left:129px;top:228.15px;width:1px;height:18.05px;background:rgba(0,0,0,0.075)"></div>
<div class="a" style="left:337px;top:228.15px;width:1px;height:18.05px;background:rgba(0,0,0,0.075)"></div>
<div class="a" style="left:365px;top:228.15px;width:1px;height:18.05px;background:#c4c7cb"></div>
<div class="a" style="left:448px;top:228.15px;width:1px;height:18.05px;background:rgba(0,0,0,0.075)"></div>
<div class="a" style="left:510px;top:228.15px;width:1px;height:18.05px;background:rgba(0,0,0,0.075)"></div>
<div class="a" style="left:129px;top:246.20px;width:1px;height:18.05px;background:rgba(0,0,0,0.075)"></div>
<div class="a" style="left:337px;top:246.20px;width:1px;height:18.05px;background:rgba(0,0,0,0.075)"></div>
<div class="a" style="left:365px;top:246.20px;width:1px;height:18.05px;background:#c4c7cb"></div>
<div class="a" style="left:448px;top:246.20px;width:1px;height:18.05px;background:rgba(0,0,0,0.075)"></div>
<div class="a" style="left:510px;top:246.20px;width:1px;height:18.05px;background:rgba(0,0,0,0.075)"></div>
<div class="a" style="left:129px;top:264.25px;width:1px;height:18.05px;background:rgba(0,0,0,0.075)"></div>
<div class="a" style="left:337px;top:264.25px;width:1px;height:18.05px;background:rgba(0,0,0,0.075)"></div>
<div class="a" style="left:365px;top:264.25px;width:1px;height:18.05px;background:#c4c7cb"></div>
<div class="a" style="left:448px;top:264.25px;width:1px;height:18.05px;background:rgba(0,0,0,0.075)"></div>
<div class="a" style="left:510px;top:264.25px;width:1px;height:18.05px;background:rgba(0,0,0,0.075)"></div>
<div class="a" style="left:129px;top:282.30px;width:1px;height:18.05px;background:rgba(0,0,0,0.075)"></div>
<div class="a" style="left:337px;top:282.30px;width:1px;height:18.05px;background:rgba(0,0,0,0.075)"></div>
<div class="a" style="left:365px;top:282.30px;width:1px;height:18.05px;background:#c4c7cb"></div>
<div class="a" style="left:448px;top:282.30px;width:1px;height:18.05px;background:rgba(0,0,0,0.075)"></div>
<div class="a" style="left:510px;top:282.30px;width:1px;height:18.05px;background:rgba(0,0,0,0.075)"></div>
<div class="a" style="left:129px;top:300.35px;width:1px;height:18.05px;background:rgba(0,0,0,0.075)"></div>
<div class="a" style="left:337px;top:300.35px;width:1px;height:18.05px;background:rgba(0,0,0,0.075)"></div>
<div class="a" style="left:365px;top:300.35px;width:1px;height:18.05px;background:#c4c7cb"></div>
<div class="a" style="left:448px;top:300.35px;width:1px;height:18.05px;background:rgba(0,0,0,0.075)"></div>
<div class="a" style="left:510px;top:300.35px;width:1px;height:18.05px;background:rgba(0,0,0,0.075)"></div>
<div class="a" style="left:129px;top:318.40px;width:1px;height:18.05px;background:rgba(0,0,0,0.075)"></div>
<div class="a" style="left:337px;top:318.40px;width:1px;height:18.05px;background:rgba(0,0,0,0.075)"></div>
<div class="a" style="left:365px;top:318.40px;width:1px;height:18.05px;background:#c4c7cb"></div>
<div class="a" style="left:448px;top:318.40px;width:1px;height:18.05px;background:rgba(0,0,0,0.075)"></div>
<div class="a" style="left:510px;top:318.40px;width:1px;height:18.05px;background:rgba(0,0,0,0.075)"></div>
<div class="a" style="left:129px;top:336.45px;width:1px;height:18.05px;background:rgba(0,0,0,0.075)"></div>
<div class="a" style="left:337px;top:336.45px;width:1px;height:18.05px;background:rgba(0,0,0,0.075)"></div>
<div class="a" style="left:365px;top:336.45px;width:1px;height:18.05px;background:#c4c7cb"></div>
<div class="a" style="left:448px;top:336.45px;width:1px;height:18.05px;background:rgba(0,0,0,0.075)"></div>
<div class="a" style="left:510px;top:336.45px;width:1px;height:18.05px;background:rgba(0,0,0,0.075)"></div>
<div class="a" style="left:129px;top:354.50px;width:1px;height:18.05px;background:rgba(0,0,0,0.075)"></div>
<div class="a" style="left:337px;top:354.50px;width:1px;height:18.05px;background:rgba(0,0,0,0.075)"></div>
<div class="a" style="left:365px;top:354.50px;width:1px;height:18.05px;background:#c4c7cb"></div>
<div class="a" style="left:448px;top:354.50px;width:1px;height:18.05px;background:rgba(0,0,0,0.075)"></div>
<div class="a" style="left:510px;top:354.50px;width:1px;height:18.05px;background:rgba(0,0,0,0.075)"></div>
<div class="a" style="left:129px;top:372.55px;width:1px;height:18.05px;background:rgba(0,0,0,0.075)"></div>
<div class="a" style="left:337px;top:372.55px;width:1px;height:18.05px;background:rgba(0,0,0,0.075)"></div>
<div class="a" style="left:365px;top:372.55px;width:1px;height:18.05px;background:#c4c7cb"></div>
<div class="a" style="left:448px;top:372.55px;width:1px;height:18.05px;background:rgba(0,0,0,0.075)"></div>
<div class="a" style="left:510px;top:372.55px;width:1px;height:18.05px;background:rgba(0,0,0,0.075)"></div>
<div class="a" style="left:129px;top:390.60px;width:1px;height:18.05px;background:rgba(255,255,255,0.45)"></div>
<div class="a" style="left:337px;top:390.60px;width:1px;height:18.05px;background:rgba(255,255,255,0.45)"></div>
<div class="a" style="left:365px;top:390.60px;width:1px;height:18.05px;background:rgba(255,255,255,0.45)"></div>
<div class="a" style="left:448px;top:390.60px;width:1px;height:18.05px;background:rgba(255,255,255,0.45)"></div>
<div class="a" style="left:510px;top:390.60px;width:1px;height:18.05px;background:rgba(255,255,255,0.45)"></div>
<div class="a" style="left:129px;top:408.65px;width:1px;height:18.05px;background:rgba(0,0,0,0.075)"></div>
<div class="a" style="left:337px;top:408.65px;width:1px;height:18.05px;background:rgba(0,0,0,0.075)"></div>
<div class="a" style="left:365px;top:408.65px;width:1px;height:18.05px;background:#c4c7cb"></div>
<div class="a" style="left:448px;top:408.65px;width:1px;height:18.05px;background:rgba(0,0,0,0.075)"></div>
<div class="a" style="left:510px;top:408.65px;width:1px;height:18.05px;background:rgba(0,0,0,0.075)"></div>
<div class="a" style="left:129px;top:426.70px;width:1px;height:18.05px;background:rgba(0,0,0,0.075)"></div>
<div class="a" style="left:337px;top:426.70px;width:1px;height:18.05px;background:rgba(0,0,0,0.075)"></div>
<div class="a" style="left:365px;top:426.70px;width:1px;height:18.05px;background:#c4c7cb"></div>
<div class="a" style="left:448px;top:426.70px;width:1px;height:18.05px;background:rgba(0,0,0,0.075)"></div>
<div class="a" style="left:510px;top:426.70px;width:1px;height:18.05px;background:rgba(0,0,0,0.075)"></div>
<div class="a" style="left:129px;top:444.75px;width:1px;height:18.05px;background:rgba(0,0,0,0.075)"></div>
<div class="a" style="left:337px;top:444.75px;width:1px;height:18.05px;background:rgba(0,0,0,0.075)"></div>
<div class="a" style="left:365px;top:444.75px;width:1px;height:18.05px;background:#c4c7cb"></div>
<div class="a" style="left:448px;top:444.75px;width:1px;height:18.05px;background:rgba(0,0,0,0.075)"></div>
<div class="a" style="left:510px;top:444.75px;width:1px;height:18.05px;background:rgba(0,0,0,0.075)"></div>
<div class="a" style="left:129px;top:462.80px;width:1px;height:18.05px;background:rgba(0,0,0,0.075)"></div>
<div class="a" style="left:337px;top:462.80px;width:1px;height:18.05px;background:rgba(0,0,0,0.075)"></div>
<div class="a" style="left:365px;top:462.80px;width:1px;height:18.05px;background:#c4c7cb"></div>
<div class="a" style="left:448px;top:462.80px;width:1px;height:18.05px;background:rgba(0,0,0,0.075)"></div>
<div class="a" style="left:510px;top:462.80px;width:1px;height:18.05px;background:rgba(0,0,0,0.075)"></div>
<div class="a" style="left:129px;top:480.85px;width:1px;height:18.05px;background:rgba(0,0,0,0.075)"></div>
<div class="a" style="left:337px;top:480.85px;width:1px;height:18.05px;background:rgba(0,0,0,0.075)"></div>
<div class="a" style="left:365px;top:480.85px;width:1px;height:18.05px;background:#c4c7cb"></div>
<div class="a" style="left:448px;top:480.85px;width:1px;height:18.05px;background:rgba(0,0,0,0.075)"></div>
<div class="a" style="left:510px;top:480.85px;width:1px;height:18.05px;background:rgba(0,0,0,0.075)"></div>
<div class="a" style="left:129px;top:498.90px;width:1px;height:18.05px;background:rgba(255,255,255,0.45)"></div>
<div class="a" style="left:337px;top:498.90px;width:1px;height:18.05px;background:rgba(255,255,255,0.45)"></div>
<div class="a" style="left:365px;top:498.90px;width:1px;height:18.05px;background:rgba(255,255,255,0.45)"></div>
<div class="a" style="left:448px;top:498.90px;width:1px;height:18.05px;background:rgba(255,255,255,0.45)"></div>
<div class="a" style="left:510px;top:498.90px;width:1px;height:18.05px;background:rgba(255,255,255,0.45)"></div>
<div class="a" style="left:129px;top:516.95px;width:1px;height:18.05px;background:rgba(0,0,0,0.075)"></div>
<div class="a" style="left:337px;top:516.95px;width:1px;height:18.05px;background:rgba(0,0,0,0.075)"></div>
<div class="a" style="left:365px;top:516.95px;width:1px;height:18.05px;background:#c4c7cb"></div>
<div class="a" style="left:448px;top:516.95px;width:1px;height:18.05px;background:rgba(0,0,0,0.075)"></div>
<div class="a" style="left:510px;top:516.95px;width:1px;height:18.05px;background:rgba(0,0,0,0.075)"></div>
<div class="a" style="left:129px;top:535.00px;width:1px;height:18.05px;background:rgba(0,0,0,0.075)"></div>
<div class="a" style="left:337px;top:535.00px;width:1px;height:18.05px;background:rgba(0,0,0,0.075)"></div>
<div class="a" style="left:365px;top:535.00px;width:1px;height:18.05px;background:#c4c7cb"></div>
<div class="a" style="left:448px;top:535.00px;width:1px;height:18.05px;background:rgba(0,0,0,0.075)"></div>
<div class="a" style="left:510px;top:535.00px;width:1px;height:18.05px;background:rgba(0,0,0,0.075)"></div>
<div class="a" style="left:129px;top:553.05px;width:1px;height:18.05px;background:rgba(0,0,0,0.075)"></div>
<div class="a" style="left:337px;top:553.05px;width:1px;height:18.05px;background:rgba(0,0,0,0.075)"></div>
<div class="a" style="left:365px;top:553.05px;width:1px;height:18.05px;background:#c4c7cb"></div>
<div class="a" style="left:448px;top:553.05px;width:1px;height:18.05px;background:rgba(0,0,0,0.075)"></div>
<div class="a" style="left:510px;top:553.05px;width:1px;height:18.05px;background:rgba(0,0,0,0.075)"></div>
<div class="a" style="left:26px;top:65.7px;width:4px;height:501.3px;background:#5aa5dc"></div>
<div class="a" style="left:30px;top:65.7px;width:5.8px;height:501.3px;background:#a8d98f"></div>
<div class="a" style="left:35.8px;top:83.75px;width:4.2px;height:483.25px;background:#d69ad2"></div>
<div class="a" style="left:40px;top:408.65px;width:4.9px;height:158.35px;background:#fed600"></div>
<div class="a" style="left:129px;top:120.15px;width:207.5px;height:17.3px;border:1px solid #2f6fba"></div>
<div class="a" style="left:332px;top:134.55px;width:4.5px;height:5px;background:#2f6fba"></div>
<div class="a" style="left:11px;top:119.85px;width:15px;height:18.05px;background:#e5f0fb"></div>
<svg class="a" style="left:13px;top:123.75px" width="10" height="10"><circle cx="5" cy="5" r="3.9" stroke="#3f444c" stroke-width="1.6" fill="none" stroke-dasharray="2.1 1.98"/><circle cx="5" cy="5" r="2.6" stroke="#3f444c" stroke-width="1.9" fill="none"/></svg>
<div class="a" style="left:367px;top:569.5px;width:200px;height:4.5px;border-radius:3px;background:#8a8a8a"></div>
<div class="a" style="left:568.6px;top:33px;width:1.3px;height:560px;background:#3d3d3d"></div>
<div class="a" style="left:11px;top:575.5px;width:979px;height:1px;background:#e6e6e6"></div>
<svg class="a" style="left:26px;top:583px" width="10" height="10"><g stroke="#5a8fd0" stroke-width="0.9" fill="none"><path d="M5 0.5V7.5M2.2 4.8L5 7.6L7.8 4.8M0.8 9.3H9.2"/></g></svg>
<div class="t" style="left:37.8px;top:581px;color:#5a8bcc;font-size:8.0px">Download</div>
<svg class="a" style="left:919.5px;top:581.5px" width="11" height="11"><circle cx="5.5" cy="5.5" r="4.0" stroke="#2a6cc0" stroke-width="1.7" fill="none" stroke-dasharray="2.2 1.99"/><circle cx="5.5" cy="5.5" r="2.7" stroke="#2a6cc0" stroke-width="2.0" fill="none"/></svg>
<div class="t" style="left:933px;top:580.5px;color:#4a7cc0;font-size:8.3px">Gantt Settings</div>
<div class="a" style="left:570px;top:33px;width:411px;height:535px;overflow:hidden">
<div class="a" style="left:0;top:0;width:411px;height:31px;background:#f8f8f8"></div>
<div class="a" style="left:0;top:20px;width:411px;height:1px;background:#e6e6e6"></div>
<div class="a" style="left:0;top:31.1px;width:411px;height:1.6px;background:#9aa6b2"></div>
<div class="t" style="left:1.6px;width:80px;text-align:center;top:21.5px;color:#5d636b;font-size:8.3px">September</div>
<div class="a" style="left:83.2px;top:21px;width:1px;height:10px;background:#e0e0e0"></div>
<div class="t" style="left:95.4px;width:80px;text-align:center;top:21.5px;color:#5d636b;font-size:8.3px">October</div>
<div class="a" style="left:187.5px;top:21px;width:1px;height:10px;background:#e0e0e0"></div>
<div class="t" style="left:199.4px;width:80px;text-align:center;top:21.5px;color:#5d636b;font-size:8.3px">November</div>
<div class="a" style="left:291.3px;top:21px;width:1px;height:10px;background:#e0e0e0"></div>
<div class="t" style="left:303.4px;width:80px;text-align:center;top:21.5px;color:#5d636b;font-size:8.3px">December</div>
<div class="a" style="left:395.5px;top:21px;width:1px;height:10px;background:#e0e0e0"></div>
<div class="t" style="left:396.4px;top:21.5px;color:#5d636b;font-size:8.3px">January</div>
<div class="t" style="left:167px;width:60px;text-align:center;top:10.5px;font-weight:bold;color:#2e3440">2015</div>
<div class="t" style="left:395.20000000000005px;top:10.5px;font-weight:bold;color:#2e3440">2016</div>
</div>
<svg class="a" style="left:570px;top:0" width="411" height="598" viewBox="570 0 411 598"><rect x="570" y="120.15" width="411" height="18.05" fill="#e5f0fb"/><rect x="641" y="65.7" width="99" height="502" fill="#fdf9d4"/><rect x="652.7" y="65" width="0.8" height="503" fill="#e3e3e3"/><rect x="756.9" y="65" width="0.8" height="503" fill="#e3e3e3"/><rect x="861.1" y="65" width="0.8" height="503" fill="#e3e3e3"/><rect x="965.4" y="65" width="0.8" height="503" fill="#e3e3e3"/><rect x="640" y="65.7" width="1.1" height="502" fill="#37608c"/><rect x="639.6" y="152" width="2" height="6.2" fill="#1e5fb3"/><path d="M662.3 112.0 L662.3 193.9" stroke="#858585" stroke-width="0.9" fill="none"/><path d="M662.3 121.7 L648.7 121.7 L648.7 131.1 L652.0 131.1" stroke="#858585" stroke-width="0.9" fill="none"/><path d="M651.8 128.5 L656.0 131.1 L651.8 133.7Z" fill="#111"/><path d="M662.3 139.8 L603.5 139.8 L603.5 147.9 L607.0 147.9" stroke="#858585" stroke-width="0.9" fill="none"/><path d="M606.5 145.3 L610.7 147.9 L606.5 150.5Z" fill="#111"/><path d="M634.5 147.9 L640.4 147.9" stroke="#858585" stroke-width="0.9" fill="none"/><path d="M640.4 157.8 L628.2 157.8 L628.2 166.0 L631.0 166.0" stroke="#858585" stroke-width="0.9" fill="none"/><path d="M630.7 163.4 L634.9 166.0 L630.7 168.6Z" fill="#111"/><path d="M628.2 202.1 L635.4 202.1 L635.4 192.4 L624.1 192.4 L624.1 184.0 L627.0 184.0" stroke="#858585" stroke-width="0.9" fill="none"/><path d="M626.9 181.4 L631.1 184.0 L626.9 186.6Z" fill="#111"/><path d="M662.3 193.9 L603.5 193.9 L603.5 202.1 L607.0 202.1" stroke="#858585" stroke-width="0.9" fill="none"/><path d="M606.5 199.5 L610.7 202.1 L606.5 204.7Z" fill="#111"/><path d="M655.6 111.8 L660.4 111.8" stroke="#858585" stroke-width="0.9" fill="none"/><path d="M679.6 129.9 L685.0 129.9" stroke="#858585" stroke-width="0.9" fill="none"/><path d="M682.0 166.0 L687.0 166.0" stroke="#858585" stroke-width="0.9" fill="none"/><path d="M676.0 184.0 L681.5 184.0" stroke="#858585" stroke-width="0.9" fill="none"/><path d="M698.6 364.5 L703.9 364.5" stroke="#858585" stroke-width="0.9" fill="none"/><path d="M897.8 382.6 L902.4 382.6" stroke="#858585" stroke-width="0.9" fill="none"/><path d="M729.2 436.7 L734.5 436.7" stroke="#858585" stroke-width="0.9" fill="none"/><path d="M745.6 454.8 L751.0 454.8" stroke="#858585" stroke-width="0.9" fill="none"/><path d="M749.3 472.8 L755.3 472.8" stroke="#858585" stroke-width="0.9" fill="none"/><path d="M685.8 129.9 L685.8 356.0" stroke="#858585" stroke-width="0.9" fill="none"/><path d="M682.6 184.0 L682.6 567.5" stroke="#858585" stroke-width="0.9" fill="none"/><path d="M687.0 166.0 L687.0 166.0" stroke="#858585" stroke-width="0.9" fill="none"/><path d="M688.3 166.0 L688.3 428.3 L675.5 428.3 L675.5 436.7 L678.0 436.7" stroke="#858585" stroke-width="0.9" fill="none"/><path d="M677.7 434.1 L681.9 436.7 L677.7 439.3Z" fill="#111"/><path d="M685.8 356.0 L672.5 356.0 L672.5 364.5 L675.0 364.5" stroke="#858585" stroke-width="0.9" fill="none"/><path d="M675.1 361.9 L679.3 364.5 L675.1 367.1Z" fill="#111"/><path d="M705.7 319.3 L692.3 319.3 L692.3 310.5 L695.0 310.5" stroke="#858585" stroke-width="0.9" fill="none"/><path d="M695.1 307.9 L699.3 310.5 L695.1 313.1Z" fill="#111"/><path d="M705.7 319.3 L705.7 537.0" stroke="#858585" stroke-width="0.9" fill="none"/><path d="M705.7 374.4 L692.3 374.4 L692.3 382.6 L695.0 382.6" stroke="#858585" stroke-width="0.9" fill="none"/><path d="M695.1 380.0 L699.3 382.6 L695.1 385.2Z" fill="#111"/><path d="M904.0 382.6 L904.0 411.0 L900.5 411.0 L900.5 418.7 L903.0 418.7" stroke="#858585" stroke-width="0.9" fill="none"/><path d="M902.8 416.1 L907.0 418.7 L902.8 421.3Z" fill="#111"/><path d="M735.5 436.7 L735.5 446.7 L722.1 446.7 L722.1 454.8 L725.0 454.8" stroke="#858585" stroke-width="0.9" fill="none"/><path d="M725.0 452.2 L729.2 454.8 L725.0 457.4Z" fill="#111"/><path d="M752.3 454.8 L752.3 465.0 L739.6 465.0 L739.6 472.8 L742.0 472.8" stroke="#858585" stroke-width="0.9" fill="none"/><path d="M742.0 470.2 L746.2 472.8 L742.0 475.4Z" fill="#111"/><path d="M755.5 472.8 L755.5 482.2 L742.8 482.2 L742.8 490.9 L745.0 490.9" stroke="#858585" stroke-width="0.9" fill="none"/><path d="M745.1 488.3 L749.3 490.9 L745.1 493.5Z" fill="#111"/><path d="M705.6 518.0 L692.9 518.0 L692.9 527.0 L696.0 527.0" stroke="#858585" stroke-width="0.9" fill="none"/><path d="M695.8 524.4 L700.0 527.0 L695.8 529.6Z" fill="#111"/><path d="M705.6 537.0 L692.9 537.0 L692.9 545.0 L696.0 545.0" stroke="#858585" stroke-width="0.9" fill="none"/><path d="M695.8 542.4 L700.0 545.0 L695.8 547.6Z" fill="#111"/><rect x="560.0" y="70.0" width="121.8" height="5.1" fill="#5e5e5e"/><path d="M675.8 75.1 L681.8 75.1 L681.8 79.0Z" fill="#5e5e5e"/><rect x="679.2" y="214.1" width="310.8" height="5.1" fill="#5e5e5e"/><path d="M679.2 219.2 L685.2 219.2 L679.2 223.1Z" fill="#5e5e5e"/><rect x="682.5" y="394.7" width="307.5" height="5.1" fill="#5e5e5e"/><path d="M682.5 399.8 L688.5 399.8 L682.5 403.7Z" fill="#5e5e5e"/><rect x="700.0" y="503.2" width="290.0" height="5.1" fill="#5e5e5e"/><path d="M700.0 508.3 L706.0 508.3 L700.0 512.2Z" fill="#5e5e5e"/><rect x="560.0" y="109.5" width="95.6" height="4.7" rx="0.5" fill="#8fd3d6"/><rect x="560.0" y="109.5" width="80.8" height="4.7" rx="0.5" fill="#1d64b9"/><rect x="639.3" y="109.5" width="1.5" height="4.7" fill="#1d64b9"/><rect x="610.7" y="145.6" width="23.8" height="4.7" rx="0.5" fill="#1d64b9"/><rect x="634.9" y="163.7" width="47.1" height="4.7" rx="0.5" fill="#8fd3d6"/><rect x="634.9" y="163.7" width="9.3" height="4.7" rx="0.5" fill="#1d64b9"/><rect x="642.7" y="163.7" width="1.5" height="4.7" fill="#1d64b9"/><rect x="631.1" y="181.7" width="44.9" height="4.7" rx="0.5" fill="#8fd3d6"/><rect x="631.1" y="181.7" width="12.8" height="4.7" rx="0.5" fill="#1d64b9"/><rect x="642.4" y="181.7" width="1.5" height="4.7" fill="#1d64b9"/><rect x="610.7" y="199.8" width="17.5" height="4.7" rx="0.5" fill="#1d64b9"/><rect x="679.3" y="362.2" width="19.3" height="4.7" rx="0.5" fill="#8fd3d6"/><rect x="699.3" y="380.3" width="198.5" height="4.7" rx="0.5" fill="#8fd3d6"/><rect x="907.0" y="416.4" width="83.0" height="4.7" rx="0.5" fill="#8fd3d6"/><rect x="681.9" y="434.4" width="47.3" height="4.7" rx="0.5" fill="#8fd3d6"/><rect x="729.2" y="452.5" width="16.4" height="4.7" rx="0.5" fill="#8fd3d6"/><rect x="746.4" y="470.5" width="2.9" height="4.7" rx="0.5" fill="#8fd3d6"/><rect x="749.3" y="488.6" width="76.5" height="4.7" rx="0.5" fill="#8fd3d6"/><rect x="700.0" y="524.7" width="87.6" height="4.7" rx="0.5" fill="#8fd3d6"/><rect x="700.0" y="542.7" width="87.6" height="4.7" rx="0.5" fill="#8fd3d6"/><rect x="656.3" y="128.0" width="23.4" height="7" rx="1.2" fill="#8fd3d6" stroke="#6fb5b8" stroke-width="0.6"/><rect x="658.2" y="129.8" width="3" height="3.4" fill="#d4eeee"/><rect x="674.8" y="129.8" width="3" height="3.4" fill="#d4eeee"/><path d="M704.1 308.4 L708.1 312.4 L704.1 316.4 L700.1 312.4Z" fill="#8fd3d6"/><rect x="650" y="569.5" width="47.5" height="4.5" rx="2.2" fill="#8a8a8a"/></svg>
<div class="a" style="left:570px;top:65px;width:411px;height:503px;overflow:hidden">
<div class="t" style="left:117.0px;top:0.8px">Design Engineering</div>
<div class="t" style="left:-96.5px;top:22.9px">Define System Requirements</div>
<div class="t" style="left:90.4px;top:40.9px">System Design</div>
<div class="t" style="left:114.0px;top:59.0px">Approve System Design</div>
<div class="t" style="left:69.6px;top:77.0px">Prepare Drawings for Temp Control Equipment</div>
<div class="t" style="left:117.3px;top:95.1px">Review and Approve Temp Control Equipment</div>
<div class="t" style="left:112.0px;top:113.1px">Review and Approve System Controller</div>
<div class="t" style="left:63.5px;top:131.2px">Prepare Drawings for System Controller</div>
<div class="t" style="left:143.7px;top:241.5px">Installation Begins</div>
<div class="t" style="left:133.9px;top:293.6px">Site Preparation</div>
<div class="t" style="left:332.4px;top:311.7px">Install Electrical Power</div>
<div class="t" style="left:164.7px;top:365.8px">Prepare and Solicit Bids for Temp Control Equip</div>
<div class="t" style="left:181.1px;top:383.9px">Review Bids for Temp Control Equipment</div>
<div class="t" style="left:185.5px;top:401.9px">Award Contract for Temp Control Equipment</div>
<div class="t" style="left:261.3px;top:420.0px">Fabricate &amp; Deliver Temp Control Equipment</div>
<div class="t" style="left:222.3px;top:456.1px">Install Robot Base</div>
<div class="t" style="left:222.3px;top:474.1px">Run Sealant, Air, and Water Piping</div>
</div>
<div class="a" style="left:982.5px;top:73.6px;width:5px;height:94px;border-radius:3px;background:#8a8a8a"></div>
</body></html>
